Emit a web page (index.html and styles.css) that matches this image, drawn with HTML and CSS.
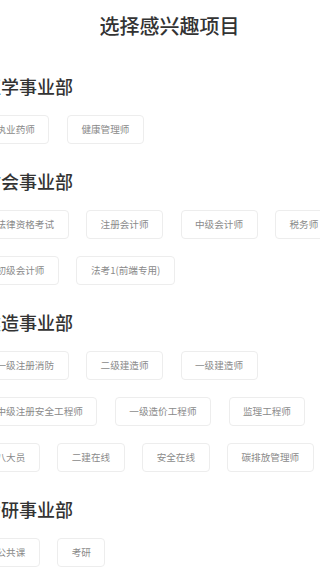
FILE: index.html
```html
<!DOCTYPE html>
<html lang="zh-CN">
<head>
<meta charset="utf-8">
<meta name="viewport" content="width=device-width, initial-scale=1">
<title>选择感兴趣项目</title>
<link rel="stylesheet" href="styles.css">
</head>
<body>
<div class="page">
  <h1 class="title">选择感兴趣项目</h1>

  <section class="group">
    <h2 class="group-title">医学事业部</h2>
    <div class="tags">
      <span class="tag">执业药师</span>
      <span class="tag">健康管理师</span>
    </div>
  </section>

  <section class="group">
    <h2 class="group-title">财会事业部</h2>
    <div class="tags">
      <span class="tag">法律资格考试</span>
      <span class="tag">注册会计师</span>
      <span class="tag">中级会计师</span>
      <span class="tag">税务师</span>
      <span class="tag">初级会计师</span>
      <span class="tag">法考1(前端专用)</span>
    </div>
  </section>

  <section class="group">
    <h2 class="group-title">建造事业部</h2>
    <div class="tags">
      <span class="tag">一级注册消防</span>
      <span class="tag">二级建造师</span>
      <span class="tag">一级建造师</span>
      <span class="tag">中级注册安全工程师</span>
      <span class="tag">一级造价工程师</span>
      <span class="tag">监理工程师</span>
      <span class="tag">八大员</span>
      <span class="tag">二建在线</span>
      <span class="tag">安全在线</span>
      <span class="tag">碳排放管理师</span>
    </div>
  </section>

  <section class="group">
    <h2 class="group-title">考研事业部</h2>
    <div class="tags">
      <span class="tag">公共课</span>
      <span class="tag">考研</span>
    </div>
  </section>
</div>
</body>
</html>
```

FILE: styles.css
```css
html, body {
  margin: 0;
  padding: 0;
  background: #ffffff;
  overflow: hidden;
}

body {
  font-family: "Noto Sans CJK SC", "Noto Sans", sans-serif;
  color: #333333;
}

.page {
  width: 375px;
  margin-left: -18px;
  padding-top: 12px;
}

.title {
  margin: 0;
  font-size: 20px;
  line-height: 28px;
  font-weight: 500;
  text-align: center;
  color: #333333;
}

.group {
  margin-top: 25px;
}

.group:first-of-type {
  margin-top: 34px;
}

.group-title {
  margin: 0 0 17px;
  padding-left: 1px;
  font-size: 18px;
  line-height: 24px;
  font-weight: 500;
  color: #333333;
}

.tags {
  display: flex;
  flex-wrap: wrap;
  column-gap: 17.5px;
  row-gap: 17px;
}

.tag {
  display: block;
  box-sizing: border-box;
  height: 29px;
  padding: 0 13.5px;
  border: 1px solid #ededed;
  border-radius: 4px;
  font-size: 9.6px;
  line-height: 27px;
  color: #8a8a8a;
  white-space: nowrap;
  background: #ffffff;
}
```
